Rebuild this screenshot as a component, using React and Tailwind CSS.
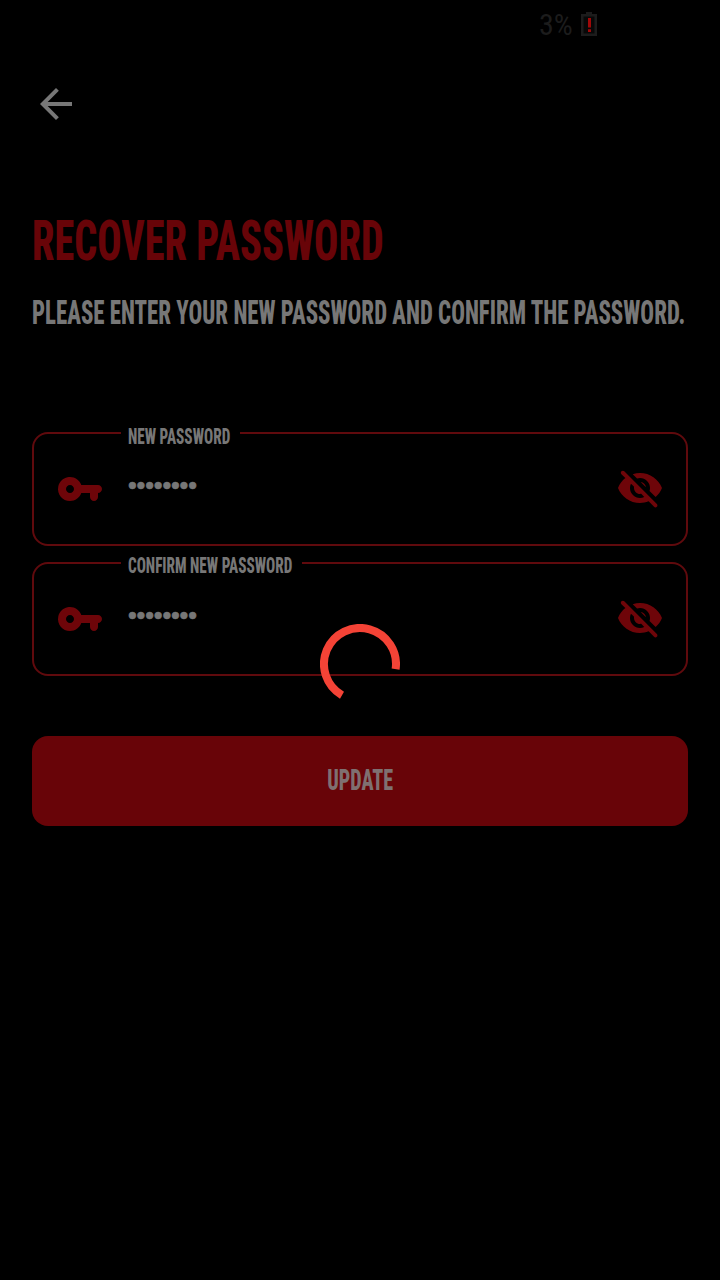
import { MdArrowBack } from "react-icons/md";

const condensed =
  "inline-block whitespace-nowrap font-['Roboto_Condensed','Roboto',sans-serif] font-stretch-condensed";

function KeyIcon() {
  return (
    <svg viewBox="0 0 24 24" className="size-12 shrink-0 fill-[#6e0509]">
      <path d="M12.65 10C11.7 7.31 8.9 5.5 5.77 6.12c-2.29.46-4.15 2.29-4.63 4.58C.32 14.57 3.26 18 7 18c2.61 0 4.83-1.67 5.65-4H17v2c0 1.1.9 2 2 2s2-.9 2-2v-2c1.1 0 2-.9 2-2s-.9-2-2-2h-8.35zM7 14c-1.1 0-2-.9-2-2s.9-2 2-2 2 .9 2 2-.9 2-2 2z" />
    </svg>
  );
}

function EyeOffIcon() {
  return (
    <svg viewBox="0 0 24 24" className="size-12 shrink-0 fill-[#6e0509]">
      <path d="M12 6.5c2.76 0 5 2.24 5 5 0 .51-.1 1-.24 1.46l3.06 3.06c1.39-1.23 2.49-2.77 3.18-4.53C21.27 7.11 17 4 12 4c-1.27 0-2.49.2-3.64.57l2.17 2.17c.47-.14.96-.24 1.47-.24zM2.71 3.16c-.39.39-.39 1.02 0 1.41l1.97 1.97C3.06 7.83 1.77 9.53 1 11.5 2.73 15.89 7 19 12 19c1.52 0 2.97-.3 4.31-.82l2.72 2.72c.39.39 1.02.39 1.41 0 .39-.39.39-1.02 0-1.41L4.13 3.16c-.39-.39-1.03-.39-1.42 0zM12 16.5c-2.76 0-5-2.24-5-5 0-.77.18-1.5.49-2.14l1.57 1.57c-.03.18-.06.37-.06.57 0 1.66 1.34 3 3 3 .2 0 .38-.03.57-.07L14.14 16c-.65.32-1.37.5-2.14.5zm2.97-5.33c-.15-1.4-1.25-2.49-2.64-2.64l2.64 2.64z" />
    </svg>
  );
}

function PasswordField({ label, labelClass }) {
  return (
    <div className="relative flex h-[114px] items-center rounded-2xl border-2 border-[#600a0d] px-[22px]">
      <div className={`absolute left-[87px] h-6 bg-black pl-[7px] ${labelClass}`}>
        <span className={`${condensed} origin-left scale-x-[0.707] text-[21.5px] leading-6 font-extrabold text-[#777777]`}>
          {label}
        </span>
      </div>
      <KeyIcon />
      <span className="ml-6 flex-1 pb-[9px] font-['Liberation_Sans',sans-serif] text-[25px] leading-7 tracking-[-0.15px] text-[#777777] [-webkit-text-stroke:0.6px_#777777]">
        ••••••••
      </span>
      <EyeOffIcon />
    </div>
  );
}

export default function App() {
  return (
    <div className="relative flex h-[1280px] w-[720px] flex-col overflow-hidden bg-black">
      <div className="flex h-[50px] shrink-0 items-center pl-[539px]">
        <span className={`${condensed} w-[42px] text-[30px] leading-8 font-normal text-[#1c1c1c]`}>3%</span>
        <svg viewBox="0 0 16 24" className="mb-[2px] h-6 w-4">
          <path d="M5 0h6v2h5v22H0V2h5z" fill="#1c1c1c" />
          <path d="M2.5 4.5h11v17h-11z" fill="#080808" />
          <path d="M7 6h3v9.5H7zM7 17.2h3v2.8H7z" fill="#a00808" />
        </svg>
      </div>

      <button className="mt-[30px] ml-8 size-12 shrink-0 text-[#777777]">
        <MdArrowBack className="size-12" />
      </button>

      <h1 className="mt-[81px] ml-8 h-16 shrink-0">
        <span className={`${condensed} origin-left scale-x-[0.72] text-[56px] leading-[64px] font-extrabold text-[#680408]`}>
          RECOVER PASSWORD
        </span>
      </h1>
      <p className="mt-[20px] ml-8 h-10 shrink-0">
        <span className={`${condensed} origin-left scale-x-[0.707] text-[32.3px] leading-10 font-extrabold text-[#777777]`}>
          PLEASE ENTER YOUR NEW PASSWORD AND CONFIRM THE PASSWORD.
        </span>
      </p>

      <div className="mx-8 mt-[99px] flex flex-col gap-4">
        <PasswordField label="NEW PASSWORD" labelClass="top-[-9px] w-[119px]" />
        <PasswordField label="CONFIRM NEW PASSWORD" labelClass="top-[-10px] w-[181px]" />
      </div>

      <button className="mx-8 mt-[60px] flex h-[90px] shrink-0 items-center justify-center rounded-2xl bg-[#680408] pb-[2px]">
        <span className={`${condensed} scale-x-[0.67] text-[30px] leading-8 font-extrabold text-[#7f7071]`}>UPDATE</span>
      </button>

      <svg viewBox="0 0 80 80" className="absolute top-[624px] left-[320px] size-20">
        <path d="M22 71.18A36 36 0 1 1 75.6 45.2" fill="none" stroke="#f44336" strokeWidth="8" />
      </svg>
    </div>
  );
}
